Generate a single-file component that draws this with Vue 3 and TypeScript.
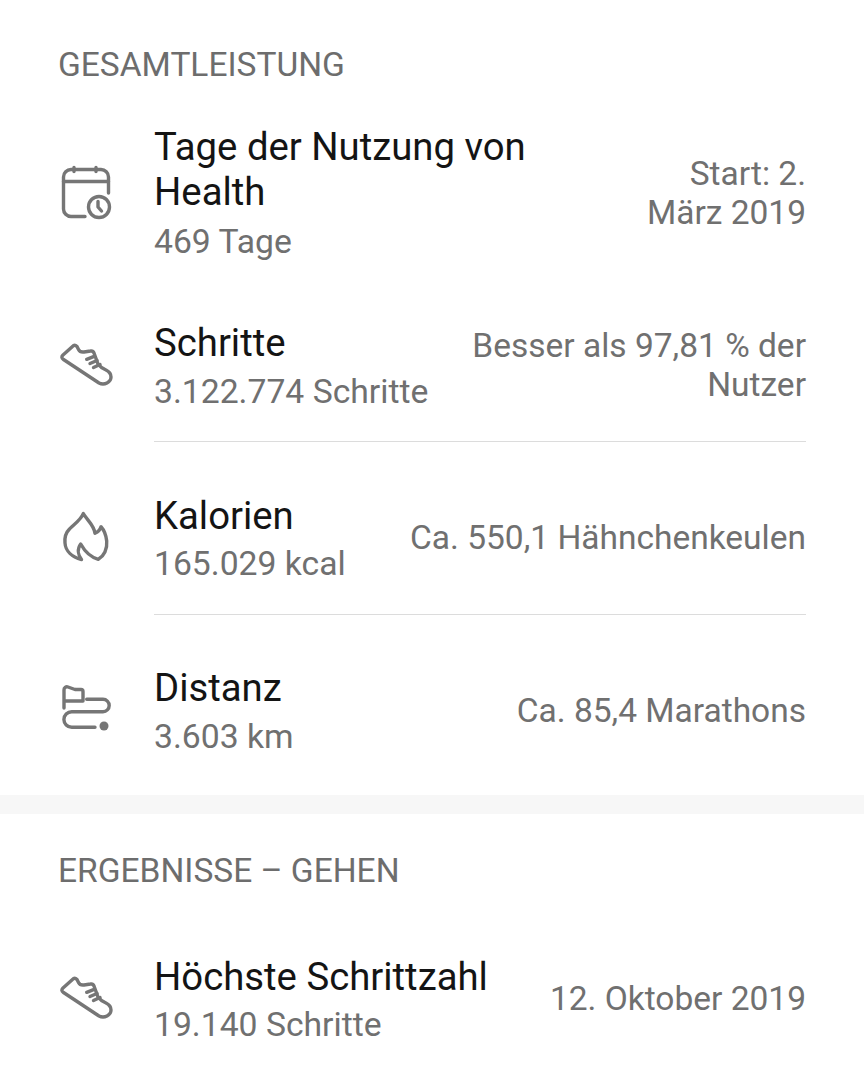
<script setup lang="ts">
interface Row {
  icon: string
  title: string
  sub: string
  note: string
  noteWidth: string
  divider?: boolean
}
const overall: Row[] = [
  { icon: 'calendar', title: 'Tage der Nutzung von Health', sub: '469 Tage', note: 'Start: 2. März 2019', noteWidth: '180px' },
  { icon: 'shoe', title: 'Schritte', sub: '3.122.774 Schritte', note: 'Besser als 97,81 % der Nutzer', noteWidth: '340px', divider: true },
  { icon: 'flame', title: 'Kalorien', sub: '165.029 kcal', note: 'Ca. 550,1 Hähnchenkeulen', noteWidth: '400px', divider: true },
  { icon: 'route', title: 'Distanz', sub: '3.603 km', note: 'Ca. 85,4 Marathons', noteWidth: '400px' },
]
const walking: Row[] = [
  { icon: 'shoe', title: 'Höchste Schrittzahl', sub: '19.140 Schritte', note: '12. Oktober 2019', noteWidth: '300px' },
]
const sections = [
  { name: 'GESAMTLEISTUNG', rows: overall },
  { name: 'ERGEBNISSE – GEHEN', rows: walking },
]
</script>

<template>
  <main class="page">
    <section v-for="s in sections" :key="s.name" class="section">
      <h2 class="head">{{ s.name }}</h2>
      <div v-for="r in s.rows" :key="r.title" class="row" :class="{ lined: r.divider, tall: r.icon === 'calendar' }">
        <svg class="icon" viewBox="0 0 60 60" fill="none" stroke="#767676" stroke-width="3.4" stroke-linecap="round" stroke-linejoin="round">
          <template v-if="r.icon === 'calendar'">
            <path d="M28 53.500H14a7.500 7.500 0 0 1-7.500-7.500V14A7.500 7.500 0 0 1 14 6.500h30a7.500 7.500 0 0 1 7.500 7.500v16" />
            <path d="M6.500 18.500h45M17 4.500v4M39 4.500v4" />
            <circle cx="42" cy="44" r="10.500" />
            <path d="M41 38.500v5.500l3.500 4" />
          </template>
          <template v-else-if="r.icon === 'shoe'">
            <path d="M15.500 9.500 6 18Q3.500 20.500 6.500 22.500L42 46Q46 48 50 46 54 44 54 40 54 35.500 49 33 44 31 41 27L37 16Q36 13.500 33.500 14L27 15Q23 15.500 21.500 12.500L20 9.500Q17.500 7 15.500 9.500Z" />
            <path d="M29.700 22.300 36.500 19.700M33 26.500 40 23.500M36.500 30.500 43 27.500" />
          </template>
          <template v-else-if="r.icon === 'flame'">
            <path d="M26.300 3.500C24 10 16 15 12.500 19 8.500 23 7.500 28 8 33 8.500 41 15 47 24.500 49.500 21 45 20 39 23.700 34 27 40 33 47 41.300 49.300 47 46 50.500 39 49.700 31 49 25 47 20 44 16.700 43 20 41 22 38 23.300 37 15 30 10 26.300 3.500Z" />
          </template>
          <template v-else>
            <path d="M7 26V8a3 3 0 0 1 4-3l7 2.500h6a2 2 0 0 1 2 2V19H7" />
            <path d="M29.700 17.300H46a6.200 6.200 0 0 1 0 12.400H14.700a7.800 7.800 0 0 0 0 15.600H38" />
            <circle cx="47" cy="44" r="4.500" fill="#767676" stroke="none" />
          </template>
        </svg>
        <div class="main">
          <div class="title">{{ r.title }}</div>
          <div class="sub">{{ r.sub }}</div>
        </div>
        <div class="note" :style="{ width: r.noteWidth }">{{ r.note }}</div>
      </div>
    </section>
  </main>
</template>

<style>
html, body { background: #fff; }
</style>

<style scoped>
.page {
  width: 864px;
  height: 1080px;
  overflow: hidden;
  background: #fff;
  font-family: Roboto, "Liberation Sans", sans-serif;
}
.section + .section {
  border-top: 19px solid #f7f7f7;
}
.head {
  margin: 0;
  padding: 46px 58px 0;
  font-size: 33.500px;
  line-height: 38px;
  font-weight: 400;
  color: #6d6d6d;
}
.section + .section .head {
  padding-top: 38px;
  margin-bottom: 22px;
}
.row {
  display: flex;
  align-items: center;
  padding: 51px 58px 29px 57px;
  position: relative;
}
.row:last-child {
  padding-top: 50px;
  padding-bottom: 36px;
}
.row.tall {
  padding-top: 39.500px;
  padding-bottom: 5.500px;
}
.row.tall + .row {
  padding-top: 52px;
}
.section + .section .row {
  padding-top: 41.500px;
}
.row.lined::after {
  content: "";
  position: absolute;
  left: 154px;
  right: 58px;
  bottom: 0;
  height: 1px;
  background: #dcdcdc;
}
.icon {
  flex: none;
  width: 60px;
  height: 60px;
  margin-right: 37px;
}
.main {
  flex: 1;
  min-width: 0;
  margin-bottom: -3px;
}
.tall .main,
.row.tall + .row .main {
  margin-bottom: -4px;
}
.tall .main {
  padding-right: 20px;
}
.title {
  font-size: 38.300px;
  line-height: 45px;
  color: #141414;
}
.sub {
  margin-top: 1px;
  font-size: 33.700px;
  line-height: 50px;
  color: #707070;
}
.row:last-child .sub,
.row.tall + .row .sub {
  margin-top: 2px;
}
.tall .sub {
  margin-top: 3px;
}
.section + .section .sub {
  margin-top: 1px;
}
.note {
  flex: none;
  margin-bottom: 4px;
  font-size: 33.500px;
  line-height: 39px;
  text-align: right;
  color: #707070;
}
.tall .note {
  margin-bottom: 0;
}
</style>
